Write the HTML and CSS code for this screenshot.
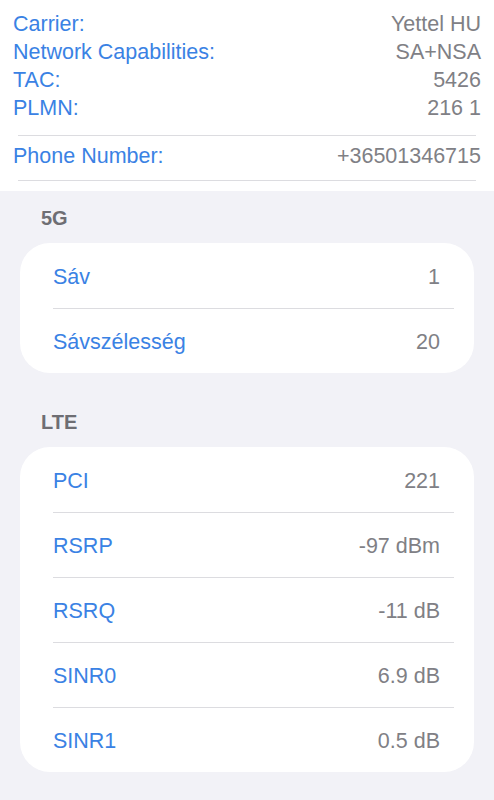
FILE: index.html
```html
<!DOCTYPE html>
<html>
<head>
    <title>Cell Info</title>
    <link rel="stylesheet" href="styles.css">
</head>

<body>
    <header class="summary">
        <div class="summary-list">
            <div class="summary-row"><span class="key">Carrier:</span><span class="val">Yettel HU</span></div>
            <div class="summary-row"><span class="key">Network Capabilities:</span><span class="val">SA+NSA</span></div>
            <div class="summary-row"><span class="key">TAC:</span><span class="val">5426</span></div>
            <div class="summary-row"><span class="key">PLMN:</span><span class="val">216 1</span></div>
        </div>
        <hr class="rule">
        <div class="summary-row phone"><span class="key">Phone Number:</span><span class="val">+36501346715</span></div>
        <hr class="rule last">
    </header>

    <main>
        <section class="group">
            <h2>5G</h2>
            <ul class="card">
                <li><span class="key">Sáv</span><span class="val">1</span></li>
                <li><span class="key">Sávszélesség</span><span class="val">20</span></li>
            </ul>
        </section>

        <section class="group">
            <h2>LTE</h2>
            <ul class="card">
                <li><span class="key">PCI</span><span class="val">221</span></li>
                <li><span class="key">RSRP</span><span class="val">-97 dBm</span></li>
                <li><span class="key">RSRQ</span><span class="val">-11 dB</span></li>
                <li><span class="key">SINR0</span><span class="val">6.9 dB</span></li>
                <li><span class="key">SINR1</span><span class="val">0.5 dB</span></li>
            </ul>
        </section>
    </main>
</body>
</html>
```

FILE: styles.css
```css
body { font-family: 'Liberation Sans', Arial, sans-serif; font-size: 21.5px; margin: 0; padding: 0; background-color: #f2f2f7; }
.key { color: #3a82e4; }
.val { color: #808085; }

/* Top summary */
.summary { background: white; padding: 10px 13px; }
.summary-row { display: flex; justify-content: space-between; height: 28px; line-height: 28px; }
.summary-row.phone { margin: 6px 0 10px 0; }
.rule { border: none; border-top: 1px solid #dcdce0; margin: 13px 5px 0 5px; height: 0; }
.rule.last { margin-top: 0; }

/* Grouped cards */
main { padding: 15px 20px 20px 20px; }
.group { margin-bottom: 37px; }
.group h2 { margin: 0 0 13px 21px; font-size: 20px; font-weight: bold; color: #6e6e73; line-height: 24px; }
.card { list-style: none; margin: 0; padding: 0 0 0 33px; background: white; border-radius: 30px; }
.card li { display: flex; justify-content: space-between; align-items: center; height: 65px; margin-right: 20px; padding: 3px 14px 0 0; box-sizing: border-box; }
.card li + li { border-top: 1px solid #dcdce0; }
```
